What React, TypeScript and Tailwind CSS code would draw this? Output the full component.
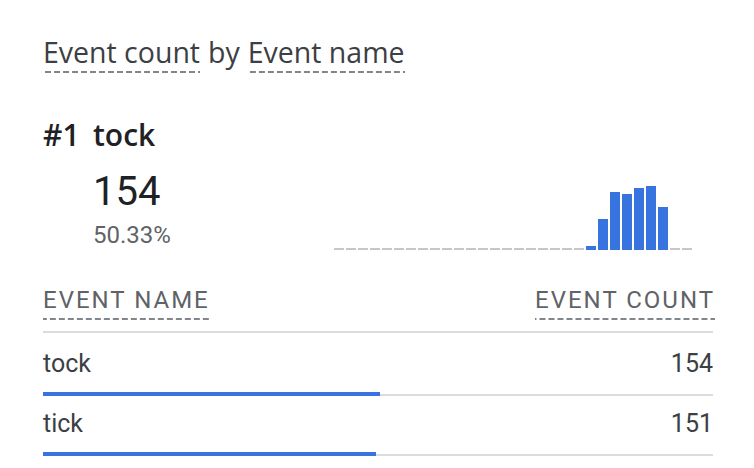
const bars: (number | null)[] = [
  ...Array(21).fill(null),
  4, 31, 58, 56, 62, 64, 43,
  null, null,
];

const rows = [
  { name: 'tock', count: 154, pct: 50.33 },
  { name: 'tick', count: 151, pct: 49.67 },
];

const dashed =
  'bg-[linear-gradient(to_right,#80868b_66%,transparent_0)] bg-[length:9px_2px] bg-repeat-x bg-bottom';

export default function App() {
  return (
    <div className="w-[754px] h-[468px] bg-white pl-[43px] pr-[41px] pt-[36px] overflow-hidden">
      {/* card title */}
      <div className="font-['Open_Sans',sans-serif] text-[28.5px] leading-[32px] text-[#3c4043] flex gap-[8px]">
        <span className={`pb-[5px] ${dashed}`}>Event count</span>
        <span>by</span>
        <span className={`pb-[5px] ${dashed}`}>Event name</span>
      </div>

      {/* top item + sparkline */}
      <div className="flex items-end mt-[46px]">
        <div className="flex-1 pb-[1px]">
          <div className="font-['Open_Sans',sans-serif] font-semibold text-[30px] leading-[32px] text-[#202124] flex">
            <span className="w-[50px]">#1</span>
            <span>tock</span>
          </div>
          <div className="pl-[50px] font-['Roboto',sans-serif]">
            <div className="text-[40px] leading-[48px] text-[#202124] mt-[17px]">154</div>
            <div className="text-[24px] leading-[28px] text-[#5f6368] mt-[5px]">50.33%</div>
          </div>
        </div>
        <div className="flex items-end gap-[2px] h-[64px] mr-[21px]">
          {bars.map((v, i) =>
            v === null ? (
              <div key={i} className="w-[10px] h-[2px] bg-[#c4c7cc]" />
            ) : (
              <div key={i} className="w-[10px] bg-[#3874e0]" style={{ height: v }} />
            )
          )}
        </div>
      </div>

      {/* table */}
      <div className="mt-[36px] font-['Roboto',sans-serif]">
        <div className="flex justify-between text-[24px] leading-[28px] tracking-[2px] text-[#5f6368] pb-[11px] border-b-2 border-[#dadce0]">
          <span className={`pb-[6px] ${dashed}`}>EVENT NAME</span>
          <span className={`pb-[6px] -mr-[2px] ${dashed}`}>EVENT COUNT</span>
        </div>
        {rows.map((r, i) => (
          <div key={r.name} className={i === 0 ? 'pt-[16px]' : 'pt-[13px]'}>
            <div className="flex justify-between text-[25px] leading-[30px] text-[#3c4043]">
              <span>{r.name}</span>
              <span>{r.count}</span>
            </div>
            <div className="flex items-end h-[4px] mt-[13px]">
              <div className="h-[4px] bg-[#3874e0]" style={{ width: `${r.pct}%` }} />
              <div className="flex-1 h-[2px] bg-[#dadce0]" />
            </div>
          </div>
        ))}
      </div>
    </div>
  );
}
